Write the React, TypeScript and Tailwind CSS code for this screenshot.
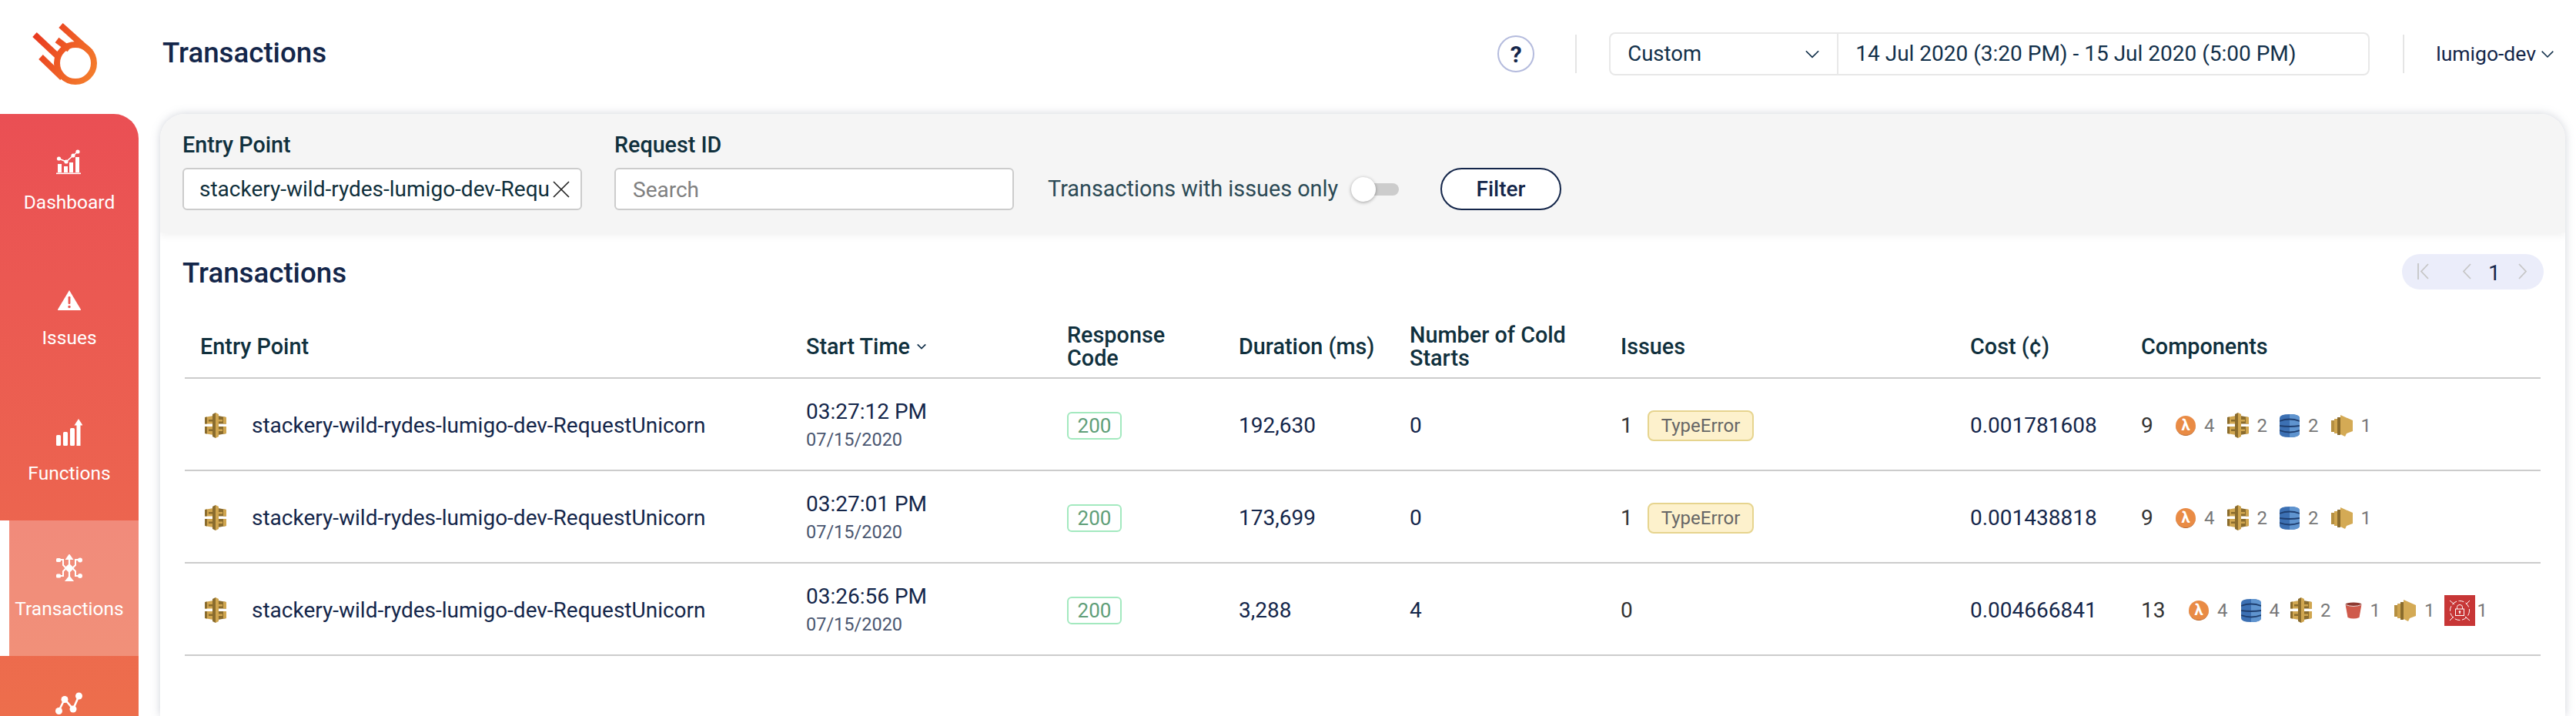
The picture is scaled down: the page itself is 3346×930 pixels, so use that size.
const head = { fontFamily: '"Roboto", "Liberation Sans", sans-serif' };

function Logo() {
  return (
    <svg width="180" height="148" viewBox="0 0 180 148" fill="none">
      <defs>
        <linearGradient id="lg" gradientUnits="userSpaceOnUse" x1="45" y1="45" x2="125" y2="90">
          <stop offset="0" stopColor="#e8391f" />
          <stop offset="1" stopColor="#f47c2c" />
        </linearGradient>
      </defs>
      <circle cx="98" cy="82" r="24" stroke="url(#lg)" strokeWidth="8" />
      <path d="M79 33 L118 68" stroke="url(#lg)" strokeWidth="8" />
      <path d="M74 52 L90 64" stroke="url(#lg)" strokeWidth="8" />
      <path d="M45 45 L76 74" stroke="url(#lg)" strokeWidth="8" />
      <path d="M53 74 L81 101" stroke="url(#lg)" strokeWidth="8" />
    </svg>
  );
}

function DashIcon() {
  return (
    <svg width="34" height="34" viewBox="0 0 34 34" fill="white">
      <rect x="0" y="30.5" width="32" height="1.6" />
      <rect x="2" y="19" width="5" height="11" />
      <rect x="10" y="22" width="5" height="8" />
      <rect x="17" y="17" width="5" height="13" />
      <rect x="25" y="10" width="5" height="20" />
      <circle cx="3.5" cy="12" r="2.6" />
      <circle cx="13" cy="16" r="2.6" />
      <circle cx="22" cy="8" r="2.6" />
      <circle cx="28" cy="3" r="2.6" />
      <path d="M3.5 12 L13 16 L22 8 L28 3" stroke="white" strokeWidth="1.6" fill="none" />
    </svg>
  );
}

function IssueIcon() {
  return (
    <svg width="32" height="28" viewBox="0 0 32 28">
      <path d="M16 1 L31 26 Q31.5 27 30 27 L2 27 Q0.5 27 1 26 Z" fill="white" />
      <rect x="14.6" y="9" width="2.8" height="10" rx="1.2" fill="#ea5751" />
      <circle cx="16" cy="22.5" r="1.7" fill="#ea5751" />
    </svg>
  );
}

function FuncIcon() {
  return (
    <svg width="34" height="36" viewBox="0 0 34 36" fill="white">
      <rect x="0" y="21" width="6" height="14" rx="1.5" />
      <rect x="9" y="17" width="6" height="18" rx="1.5" />
      <rect x="18" y="12" width="6" height="23" rx="1.5" />
      <rect x="26.5" y="8" width="5" height="27" />
      <path d="M29 0 L34.5 8.5 L23.5 8.5 Z" />
    </svg>
  );
}

function TxIcon() {
  return (
    <svg width="34" height="36" viewBox="0 0 34 36" fill="none" stroke="white" strokeWidth="2">
      <path d="M17 4 V32" strokeWidth="2.2" />
      <path d="M13.5 6 L17 1 L20.5 6 Z" fill="white" />
      <path d="M13 34 L17 29 L21 34 Z" fill="white" />
      <path d="M17 12 L23.5 18 L17 24 L10.5 18 Z" fill="white" stroke="none" />
      <path d="M5 7 H9 V14 L12 17" />
      <path d="M5 28 H9 V22 L12 19" />
      <path d="M29 7 H25 V14 L22 17" />
      <path d="M29 28 H25 V22 L22 19" />
      <rect x="0" y="5" width="6" height="5" rx="1.5" fill="white" stroke="none" />
      <rect x="0" y="25.5" width="6" height="5" rx="1.5" fill="white" stroke="none" />
      <circle cx="31" cy="7.5" r="3" fill="white" stroke="none" />
      <circle cx="31" cy="28" r="3" fill="white" stroke="none" />
    </svg>
  );
}

function MapIcon() {
  return (
    <svg width="36" height="30" viewBox="0 0 36 30" fill="white">
      <path d="M4 25 L12 9 L23 22 L30 6" stroke="white" strokeWidth="2.6" fill="none" />
      <circle cx="4.5" cy="24.5" r="4.5" />
      <circle cx="12" cy="9.5" r="4.5" />
      <circle cx="23" cy="22" r="4.5" />
      <circle cx="30.5" cy="5" r="4.5" />
    </svg>
  );
}

function ApiGw() {
  return (
    <svg width="28" height="33" viewBox="0 0 28 33" className="shrink-0">
      <path d="M0 6 L11 4 V14.5 H0 Z" fill="#d0a650" />
      <path d="M0 6 L3 5.5 V14.5 H0 Z" fill="#8a6c2e" />
      <rect x="5" y="9" width="6" height="2.5" fill="#8a6c2e" />
      <path d="M0 18 H11 V29 L0 27 Z" fill="#d0a650" />
      <path d="M0 18 H3 V27.5 L0 27 Z" fill="#8a6c2e" />
      <rect x="5" y="21.5" width="6" height="2.5" fill="#8a6c2e" />
      <path d="M28 6 L17 4 V14.5 H28 Z" fill="#8a6c2e" />
      <path d="M28 6 L24 5.3 V14.5 H28 Z" fill="#d0a650" />
      <rect x="17" y="9" width="6" height="2.5" fill="#d0a650" />
      <path d="M28 18 H17 V29 L28 27 Z" fill="#8a6c2e" />
      <path d="M28 18 H24 V27.7 L28 27 Z" fill="#d0a650" />
      <rect x="17" y="21.5" width="6" height="2.5" fill="#d0a650" />
      <path d="M14 0 L18 2 V31 L14 33 Z" fill="#d0a650" />
      <path d="M14 0 L10 2 V31 L14 33 Z" fill="#8a6c2e" />
    </svg>
  );
}

function Lambda() {
  return (
    <div className="w-[26px] h-[26px] rounded-full bg-[#e98b45] flex items-center justify-center text-white font-bold text-[20px] leading-none shrink-0 border-b border-[#b9682f]">
      λ
    </div>
  );
}

function Dynamo() {
  return (
    <svg width="26" height="30" viewBox="0 0 26 30" className="shrink-0">
      <path d="M0 5 Q0 0 13 0 Q26 0 26 5 V25 Q26 30 13 30 Q0 30 0 25 Z" fill="#3c70b3" />
      <path d="M13 0 Q26 0 26 5 V25 Q26 30 13 30 Z" fill="#5f94cf" />
      <path d="M0 9 Q13 4 26 9" stroke="#1f3f70" strokeWidth="1.8" fill="none" />
      <path d="M0 15 Q13 17 26 15" stroke="#1f3f70" strokeWidth="1.8" fill="none" />
      <path d="M0 21 Q13 26 26 21" stroke="#1f3f70" strokeWidth="1.8" fill="none" />
    </svg>
  );
}

function Kinesis() {
  return (
    <svg width="28" height="28" viewBox="0 0 28 28" className="shrink-0">
      <rect x="0" y="7" width="4" height="15" fill="#b58f41" />
      <rect x="4" y="5" width="4" height="19" fill="#d0a650" />
      <rect x="8" y="3" width="4" height="23" fill="#8a6c2e" />
      <path d="M12 0 L28 7 V21 L20 24 L18 28 L12 25 Z" fill="#d4aa55" />
    </svg>
  );
}

function S3() {
  return (
    <svg width="22" height="22" viewBox="0 0 22 22" className="shrink-0">
      <path d="M0.5 3 L3.5 20 Q11 23 18.5 20 L21.5 3 Z" fill="#cf5a4b" />
      <ellipse cx="11" cy="3" rx="10.5" ry="2.6" fill="#8e3a31" />
      <path d="M0.5 3.4 Q11 7.5 21.5 3.4" stroke="white" strokeWidth="0.8" fill="none" />
    </svg>
  );
}

function Shield() {
  return (
    <svg width="40" height="40" viewBox="0 0 40 40" className="shrink-0">
      <rect width="40" height="40" fill="#c73636" />
      <g stroke="white" fill="none" strokeWidth="1">
        <circle cx="20" cy="20" r="12.5" strokeDasharray="7 2.5" />
        <path d="M7 7 L13 12 M33 33 L27 28 M33 7 L28 12 M7 33 L12 28" />
        <rect x="14.5" y="18" width="11" height="8.5" />
        <path d="M16.5 18 V15.5 Q16.5 12.5 20 12.5 Q23.5 12.5 23.5 15.5 V18" />
      </g>
      <circle cx="20" cy="21.5" r="1.3" fill="white" />
      <rect x="19.4" y="21.5" width="1.2" height="3" fill="white" />
    </svg>
  );
}

type Item = { icon: React.ReactNode; n: number; cls?: string };

function Components({ total, items }: { total: number; items: Item[] }) {
  return (
    <div className="flex items-center">
      <span className={`text-[28px] text-[#333] ${total > 9 ? 'w-[62px]' : 'w-[45px]'}`}>{total}</span>
      {items.map((it, i) => (
        <div key={i} className={`flex items-center ${it.cls ?? 'mr-[16px]'}`}>
          {it.icon}
          <span className="text-[24px] text-[#777] ml-[11px]">{it.n}</span>
        </div>
      ))}
    </div>
  );
}

const cols = 'grid grid-cols-[787px_339px_223px_222px_274px_454px_222px_519px]';

const base: Item[] = [
  { icon: <Lambda />, n: 4 },
  { icon: <ApiGw />, n: 2 },
  { icon: <Dynamo />, n: 2 },
  { icon: <Kinesis />, n: 1 },
];

const rows = [
  { t: '03:27:12 PM', dur: '192,630', cold: '0', iss: '1', err: true, cost: '0.001781608', total: 9, items: base },
  { t: '03:27:01 PM', dur: '173,699', cold: '0', iss: '1', err: true, cost: '0.001438818', total: 9, items: base },
  {
    t: '03:26:56 PM', dur: '3,288', cold: '4', iss: '0', err: false, cost: '0.004666841', total: 13,
    items: [
      { icon: <Lambda />, n: 4, cls: 'mr-[17px]' },
      { icon: <Dynamo />, n: 4, cls: 'mr-[14px]' },
      { icon: <ApiGw />, n: 2, cls: 'mr-[18px]' },
      { icon: <S3 />, n: 1, cls: 'mr-[18px]' },
      { icon: <Kinesis />, n: 1, cls: 'mr-[12px]' },
      { icon: <Shield />, n: 1, cls: '[&>span]:ml-[3px]' },
    ] as Item[],
  },
];

function NavItem({ icon, label, active }: { icon: React.ReactNode; label: string; active?: boolean }) {
  return (
    <div className={`h-[176px] flex flex-col items-center pt-[44px] ${active ? 'ml-[12px] pr-[12px] bg-white/25 shadow-[-12px_0_0_#fff]' : ''}`}>
      <div className="h-[36px] flex items-end justify-center">{icon}</div>
      <div className="mt-[20px] text-[24.5px] text-white leading-[30px]" style={head}>{label}</div>
    </div>
  );
}

function Chevron({ size = 16 }: { size?: number }) {
  return (
    <svg width={size} height={size} viewBox="0 0 16 16" fill="none" stroke="#12304a" strokeWidth="1.4">
      <path d="M1.5 5 L8 11.5 L14.5 5" />
    </svg>
  );
}

export default function App() {
  return (
    <div className="w-[3346px] h-[930px] overflow-hidden bg-white flex" style={{ fontFamily: 'Roboto, "Liberation Sans", sans-serif' }}>
      <div className="w-[180px] shrink-0 flex flex-col">
        <div className="h-[148px] shrink-0"><Logo /></div>
        <div className="flex-1 overflow-hidden rounded-tr-[32px] bg-gradient-to-b from-[#ea4f54] to-[#ed6e4c]">
          <NavItem icon={<DashIcon />} label="Dashboard" />
          <NavItem icon={<IssueIcon />} label="Issues" />
          <NavItem icon={<FuncIcon />} label="Functions" />
          <NavItem icon={<TxIcon />} label="Transactions" active />
          <div className="h-[78px] flex justify-center items-start pt-[47px]"><MapIcon /></div>
        </div>
      </div>

      <div className="flex-1 flex flex-col ml-[28px] mr-[14px] min-w-0">
        <div className="h-[148px] shrink-0 flex items-center pb-[8px]">
          <div className="ml-[3px] mb-[2px] text-[36.7px] font-medium text-[#14264a]" style={head}>Transactions</div>
          <div className="ml-auto w-[48px] h-[48px] rounded-full border-2 border-[#b4bbdd] flex items-center justify-center text-[30px] font-bold text-[#14264a]">?</div>
          <div className="w-[2px] h-[50px] bg-[#e5e5e5] ml-[53px]" />
          <div className="ml-[42px] w-[988px] h-[56px] border-2 border-[#e8e8e8] rounded-[8px] flex items-center">
            <div className="w-[296px] h-full flex items-center pl-[22px] pr-[22px] justify-between border-r-2 border-[#e8e8e8] text-[27.5px] text-[#12304a]">
              <span>Custom</span>
              <Chevron size={20} />
            </div>
            <div className="pl-[22px] text-[28px] text-[#12304a] whitespace-nowrap">14 Jul 2020 (3:20 PM) - 15 Jul 2020 (5:00 PM)</div>
          </div>
          <div className="w-[2px] h-[50px] bg-[#e5e5e5] ml-[43px]" />
          <div className="ml-[41px] text-[26.5px] text-[#14264a] whitespace-nowrap">lumigo-dev</div>
          <div className="ml-[6px] mr-[14px]"><Chevron size={18} /></div>
        </div>

        <div className="flex-1 rounded-t-[32px] bg-white shadow-[0_0_12px_rgba(120,130,150,0.35)] overflow-hidden">
          <div className="h-[154px] bg-[#f5f5f5] shadow-[0_4px_10px_rgba(0,0,0,0.06)] flex items-start pl-[29px] pt-[20px] relative">
            <div className="w-[519px]">
              <div className="h-[40px] text-[28.7px] font-medium text-[#10303d] leading-[40px]" style={head}>Entry Point</div>
              <div className="mt-[10px] h-[55px] bg-white border-2 border-[#cccccc] rounded-[6px] flex items-center pl-[20px] pr-[14px] justify-between">
                <span className="whitespace-nowrap text-[28px] text-[#0f2f3b]">stackery-wild-rydes-lumigo-dev-Requ</span>
                <svg width="22" height="22" viewBox="0 0 22 22" stroke="#222" strokeWidth="1.6" className="shrink-0"><path d="M1 1 L21 21 M21 1 L1 21" /></svg>
              </div>
            </div>
            <div className="w-[519px] ml-[42px]">
              <div className="h-[40px] text-[28.7px] font-medium text-[#10303d] leading-[40px]" style={head}>Request ID</div>
              <div className="mt-[10px] h-[55px] bg-white border-2 border-[#cccccc] rounded-[6px] flex items-center pl-[22px] pt-[2px]">
                <span className="text-[28px] text-[#808080]">Search</span>
              </div>
            </div>
            <div className="ml-[44px] mt-[50px] h-[55px] flex items-center text-[28.8px] text-[#2c4a55] whitespace-nowrap w-[394px]">Transactions with issues only</div>
            <div className="mt-[50px] h-[55px] w-[62px] flex items-center relative">
              <div className="w-full h-[16px] bg-[#cccccc] rounded-full" />
              <div className="absolute left-0 top-[12px] w-[32px] h-[32px] rounded-full bg-white shadow-[0_1px_4px_rgba(0,0,0,0.35)]" />
            </div>
            <div className="ml-[54px] mt-[50px] w-[157px] h-[55px] rounded-full border-2 border-[#14264a] flex items-center justify-center text-[28px] font-medium text-[#14264a] bg-white" style={head}>Filter</div>
          </div>

          <div className="pl-[29px] pr-[28px] pt-[28px] flex items-center justify-between h-[74px]">
            <div className="mt-[4px] text-[36.7px] font-medium text-[#14264a]" style={head}>Transactions</div>
            <div className="w-[184px] h-[46px] rounded-full bg-[#ebedfa] flex items-center pl-[20px] pr-[22px]">
              <svg width="15" height="22" viewBox="0 0 15 22" fill="none" stroke="#c6c6c6" strokeWidth="1.8"><path d="M1 0 V21 M14 1 L5 10.5 L14 20" /></svg>
              <svg width="11" height="22" viewBox="0 0 11 22" fill="none" stroke="#c6c6c6" strokeWidth="1.8" className="ml-[44px]"><path d="M10 1 L1 10.5 L10 20" /></svg>
              <span className="ml-[22px] mt-[4px] text-[28px] text-[#14264a] leading-none">1</span>
              <svg width="11" height="22" viewBox="0 0 11 22" fill="none" stroke="#c6c6c6" strokeWidth="1.8" className="ml-auto"><path d="M1 1 L10 10.5 L1 20" /></svg>
            </div>
          </div>

          <div className="ml-[32px] w-[3060px]">
            <div className={`${cols} h-[116px] items-center pl-[20px] pt-[34px] border-b-2 border-[#cccccc] text-[28.8px] font-medium text-[#10303d] leading-[30px]`} style={head}>
              <div>Entry Point</div>
              <div className="flex items-center gap-[8px]">Start Time
                <svg width="14" height="14" viewBox="0 0 16 16" fill="none" stroke="#12304a" strokeWidth="2"><path d="M2 5 L8 11 L14 5" /></svg>
              </div>
              <div>Response<br />Code</div>
              <div>Duration (ms)</div>
              <div>Number of Cold<br />Starts</div>
              <div>Issues</div>
              <div>Cost (¢)</div>
              <div>Components</div>
            </div>
            {rows.map((r, i) => (
              <div key={i} className={`${cols} h-[120px] items-center pl-[20px] pt-[3px] border-b-2 border-[#cccccc] text-[28px] text-[#14264a]`}>
                <div className="flex items-center">
                  <div className="ml-[6px] w-[61px]"><ApiGw /></div>
                  <span className="whitespace-nowrap">stackery-wild-rydes-lumigo-dev-RequestUnicorn</span>
                </div>
                <div className="flex flex-col">
                  <span className="leading-[36px]">{r.t}</span>
                  <span className="text-[23.5px] text-[#4a5670] leading-[36px]">07/15/2020</span>
                </div>
                <div>
                  <span className="inline-flex items-center justify-center w-[71px] h-[36px] rounded-[6px] border-2 border-[#a3e9bf] text-[#5f9e78] text-[26px]">200</span>
                </div>
                <div>{r.dur}</div>
                <div>{r.cold}</div>
                <div className="flex items-center">
                  <span className="text-[#333] w-[35px] text-[28px]">{r.iss}</span>
                  {r.err && <span className="inline-flex items-center justify-center w-[138px] h-[40px] rounded-[8px] bg-[#fdf1cc] border-2 border-[#e6d48e] text-[#666] text-[24px]">TypeError</span>}
                </div>
                <div>{r.cost}</div>
                <Components total={r.total} items={r.items} />
              </div>
            ))}
          </div>
        </div>
      </div>
    </div>
  );
}
